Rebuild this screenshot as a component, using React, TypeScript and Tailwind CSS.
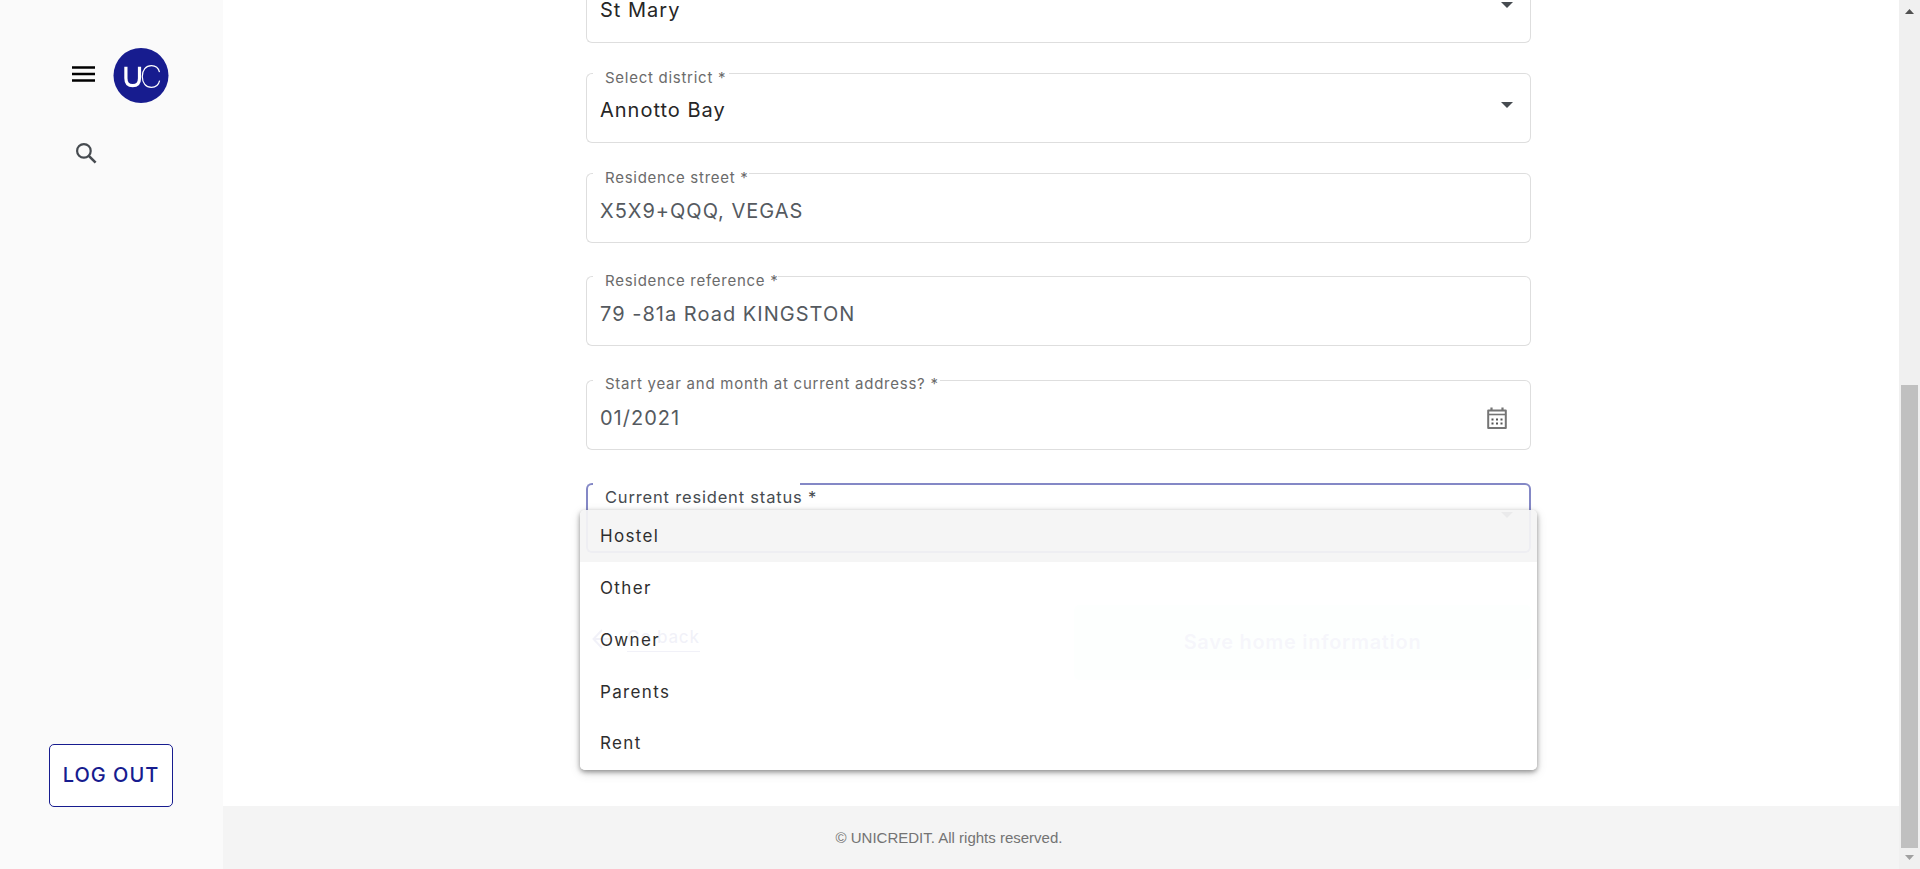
import React from "react";

type FieldProps = {
  label?: string;
  value?: string;
  notch: string;
  focused?: boolean;
  labelClass?: string;
  valueClass?: string;
  icon?: React.ReactNode;
  className?: string;
};

const Caret = () => (
  <svg width="12" height="6" viewBox="0 0 12 6" className="mr-[18px] -mt-[7px] shrink-0">
    <path d="M0 0h12L6 6z" fill="#464b50" />
  </svg>
);

const Calendar = () => (
  <svg width="21" height="23" viewBox="0 0 21 23" className="mr-[23px] mt-[6px] shrink-0" fill="none">
    <path d="M1.2 3.600h17.600v17.400H1.200z" stroke="#757575" strokeWidth="2" strokeLinejoin="round" />
    <path d="M1 7.500h18" stroke="#757575" strokeWidth="1.600" />
    <path d="M4.500 .5v3M15.500 .5v3" stroke="#757575" strokeWidth="2.200" />
    <path
      d="M4.500 11.500h2v2h-2zM9 11.500h2v2H9zM13.500 11.500h2v2h-2zM4.500 15.500h2v2h-2zM9 15.500h2v2H9zM13.500 15.500h2v2h-2z"
      fill="#555"
    />
  </svg>
);

function Field({ label, value, notch, focused, labelClass, valueClass, icon, className }: FieldProps) {
  const line = focused ? "border-[#8488c6]" : "border-[#dedede]";
  const left = focused ? "border-2 border-r-0" : "border border-r-0";
  const mid = focused ? "border-b-2" : "border-b";
  const right = focused ? "border-2 border-l-0" : "border border-l-0";
  return (
    <div className={`relative h-[70px] shrink-0 ${className ?? ""}`}>
      <div className="absolute inset-0 flex">
        <div className={`w-[7px] rounded-l-[6px] ${left} ${line}`} />
        <div className={`${notch} ${mid} ${line}`} />
        <div className={`flex-1 rounded-r-[6px] ${right} ${line}`} />
      </div>
      <div className="relative flex h-full items-center justify-between pl-[14px]">
        <span className={`whitespace-nowrap text-[20px] leading-6 ${valueClass ?? ""}`}>{value}</span>
        {icon}
      </div>
      {label && (
        <span className={`absolute left-[19px] whitespace-nowrap leading-5 ${labelClass ?? "-top-[5px] text-[15px] tracking-[0.730px] text-[#6b6b6b]"}`}>
          {label}
        </span>
      )}
    </div>
  );
}

const options = ["Hostel", "Other", "Owner", "Parents", "Rent"];

export default function App() {
  return (
    <div className="flex h-[869px] w-full overflow-hidden bg-white font-['Inter',sans-serif]">
      <aside className="flex w-[223px] shrink-0 flex-col bg-[#fafafa]">
        <div className="flex items-center pl-[72px] pt-[48px]">
          <svg width="23" height="16" viewBox="0 0 23 16" className="-mt-[3px]">
            <path d="M0 1.500h23M0 8h23M0 14.500h23" stroke="#000" strokeWidth="2.400" />
          </svg>
          <svg width="56" height="55" viewBox="0 0 56 55" className="ml-[18px]" fill="none" stroke="#fff">
            <circle cx="28" cy="27.5" r="27.5" fill="#171c8f" stroke="none" />
            <path d="M12.900 18.700v11.500c0 4.800 2.600 7.500 6.800 7.500s6.800-2.700 6.800-7.500V18.700" strokeWidth="3.200" />
            <path d="M46.500 24.200c-1-4.200-3.800-6.500-8-6.500-5.700 0-9.200 4.300-9.200 10.800s3.500 10.800 9.200 10.800c4.300 0 7.200-2.400 8.100-6.600" strokeWidth="1.200" />
          </svg>
        </div>
        <svg width="21" height="21" viewBox="0 0 21 21" className="ml-[76px] mt-[39.500px]" fill="none" stroke="#464b50">
          <circle cx="7.900" cy="7.900" r="6.800" strokeWidth="2.200" />
          <path d="M12.800 12.800l6.800 6.800" strokeWidth="2.600" />
        </svg>
        <button className="mb-[62px] ml-[49px] mt-auto h-[63px] w-[124px] rounded-[5px] border border-[#171c8f] bg-white pb-[1px] text-[20px] font-medium tracking-[1px] text-[#171c8f]">
          LOG OUT
        </button>
      </aside>

      <div className="flex min-w-0 flex-1 flex-col">
        <main className="flex h-[806px] flex-col overflow-hidden pl-[363px] pr-[368px]">
          <Field className="-mt-[27px]" notch="w-[100px]" value="St Mary" valueClass="mt-[4px] tracking-[1px] text-[#262626]" icon={<Caret />} />
          <Field className="mt-[30px]" notch="w-[136px]" label="Select district *" value="Annotto Bay" valueClass="mt-[4px] tracking-[1px] text-[#262626]" icon={<Caret />} />
          <Field className="mt-[30px]" notch="w-[156px]" label="Residence street *" value="X5X9+QQQ, VEGAS" valueClass="mt-[6px] tracking-[1px] text-[#555a5f]" />
          <Field className="mt-[33px]" notch="w-[185px]" label="Residence reference *" value="79 -81a Road KINGSTON" valueClass="mt-[6px] tracking-[1.020px] text-[#555a5f]" />
          <Field
            className="mt-[34px]"
            notch="w-[347px]"
            label="Start year and month at current address? *"
            labelClass="-top-[6px] text-[15px] tracking-[0.750px] text-[#6b6b6b]"
            value="01/2021"
            valueClass="mt-[6px] tracking-[1px] text-[#555a5f]"
            icon={<Calendar />}
          />
          <div className="relative mt-[33px]">
            <Field
              focused
              notch="w-[207px]"
              label="Current resident status *"
              labelClass="top-[4px] text-[16.500px] tracking-[0.820px] text-[#464b50]"
              icon={<Caret />}
            />
            <div className="flex items-start justify-between pt-[52px]">
              <div className="mt-[20px] flex items-center gap-[15px] pl-[6px] text-[#171c8f]">
                <svg width="20" height="20" viewBox="0 0 20 20" fill="none" stroke="currentColor" strokeWidth="2">
                  <path d="M10 1L1.500 10l8.500 9M1.500 10H20" />
                </svg>
                <span className="border-b border-[#171c8f] pb-[2px] text-[17px] font-medium leading-[24px] tracking-[0.800px]">Go back</span>
              </div>
              <div className="flex h-[75px] w-[457px] items-center justify-center rounded-[5px] bg-[#d5fbea] pb-[2px] text-[20px] font-semibold tracking-[0.700px] text-[#6064b4]">
                Save home information
              </div>
            </div>
            <div className="absolute -left-[6px] -right-[6px] top-[27px] h-[260px] rounded-[5px] bg-white/94 shadow-[0_2px_5px_rgba(0,0,0,0.400),0_3px_12px_rgba(0,0,0,0.120)]">
              {options.map((o, i) => (
                <div
                  key={o}
                  className={`flex h-[51.800px] items-center pl-[20px] pt-[2px] text-[17px] tracking-[1.350px] text-[#2e2e2e] ${i === 0 ? "rounded-t-[5px] bg-black/[0.04]" : ""}`}
                >
                  {o}
                </div>
              ))}
            </div>
          </div>
        </main>
        <footer className="flex flex-1 items-center justify-center bg-[#f4f4f4] pr-[224px] pt-[2px] font-['Liberation_Sans',sans-serif] text-[15px] text-[#737373]">
          © UNICREDIT. All rights reserved.
        </footer>
      </div>

      <div className="flex w-[21px] shrink-0 flex-col items-center bg-[#f0f0f0]">
        <svg width="9" height="5" viewBox="0 0 9 5" className="mt-[9px]">
          <path d="M0 5L4.500 0 9 5z" fill="#505050" />
        </svg>
        <div className="mt-[371px] h-[463px] w-[17px] bg-[#c0c0c0]" />
        <svg width="9" height="5" viewBox="0 0 9 5" className="mt-[7px]">
          <path d="M0 0h9L4.500 5z" fill="#a0a0a0" />
        </svg>
      </div>
    </div>
  );
}
